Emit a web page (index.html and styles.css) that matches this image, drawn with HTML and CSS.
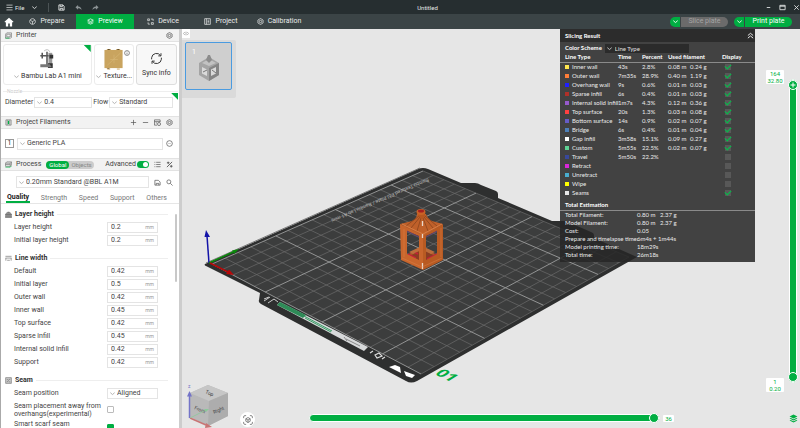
FILE: index.html
```html
<!DOCTYPE html>
<html lang="en">
<head>
<meta charset="utf-8">
<title>Untitled</title>
<link rel="stylesheet" href="styles.css">
</head>
<body>
<svg class="defs" width="0" height="0" aria-hidden="true">
  <symbol id="i-down" viewBox="0 0 8 8"><path d="M1.5 3 4 5.2 6.5 3" /></symbol>
  <symbol id="i-gear" viewBox="0 0 16 16"><path d="M8 1.2 13.9 4.6v6.8L8 14.8 2.1 11.4V4.6z" /><circle cx="8" cy="8" r="2.8" /></symbol>
  <symbol id="i-cube" viewBox="0 0 16 16"><path d="M8 1.5a6.5 6.5 0 1 0 .1 0M3 5.5 8 8l5-2.5M8 8v6" /></symbol>
  <symbol id="i-layers" viewBox="0 0 16 16"><path d="M1.5 5 8 2l6.5 3L8 8zM1.5 8 8 11l6.500-3M1.500 11 8 14l6.500-3" /></symbol>
  <symbol id="i-menu" viewBox="0 0 16 16"><path d="M1 2.500h14M1 8h14M1 13.500h14" /></symbol>
</svg>
<div class="app">
  <header class="titlebar">
    <button class="file"><svg class="ic"><use href="#i-menu"/></svg>File</button>
    <button class="tb" aria-label="File menu"><svg class="ic"><use href="#i-down"/></svg></button>
    <span class="sep"></span>
    <button class="tb" aria-label="Save"><svg class="ic" viewBox="0 0 16 16"><path d="M2 2h9l3 3v9H2zM5 2v4h5V2M5 14v-4h6v4" stroke-width="2"/></svg></button>
    <button class="tb dim" aria-label="Undo"><svg class="ic" viewBox="0 0 16 16"><path class="solid" d="M7 2v3.500c5 0 7.500 3 8 8-2-3-4-4-8-4V13L1 7.500z"/></svg></button>
    <button class="tb dim" aria-label="Redo"><svg class="ic" viewBox="0 0 16 16"><path class="solid" d="M9 2v3.500c-5 0-7.500 3-8 8 2-3 4-4 8-4V13l6-5.500z"/></svg></button>
    <h1>Untitled</h1>
    <div class="winbtns">
      <button class="tb" aria-label="Minimize"><svg class="ic" viewBox="0 0 8 8"><path d="M2 4h4"/></svg></button>
      <button class="tb" aria-label="Maximize"><svg class="ic" viewBox="0 0 8 8"><path d="M1 1.500h6v5H1zM1 2.500h6"/></svg></button>
      <button class="tb" aria-label="Close"><svg class="ic" viewBox="0 0 8 8"><path d="M1.500 1.500l5 5M6.500 1.500l-5 5"/></svg></button>
    </div>
  </header>

  <nav class="nav">
    <a href="#" class="home" aria-label="Home"><svg viewBox="0 0 16 16"><path d="M8 1 .8 7.500l1 1.200L3 7.800V15h3.700v-4.500h2.600V15H13V7.800l1.200.9 1-1.200z" fill="#fff"/></svg></a>
    <a href="#" class="tab"><svg class="ic"><use href="#i-cube"/></svg>Prepare</a>
    <a href="#" class="tab on"><svg class="ic"><use href="#i-layers"/></svg>Preview</a>
    <a href="#" class="tab"><svg class="ic" viewBox="0 0 16 16"><path d="M1.500 2h4v4h-4zM10 10.500h4.500v4H10zM9 2.500h5v4M6.500 14H2.500v-4"/></svg>Device</a>
    <a href="#" class="tab"><svg class="ic" viewBox="0 0 16 16"><path d="M1.500 1.500h13v13h-13zM5.500 1.500v13M8 5h4M8 8h4M8 11h4"/></svg>Project</a>
    <a href="#" class="tab"><svg class="ic"><use href="#i-gear"/></svg>Calibration</a>
    <div class="actions">
      <div class="split off"><button aria-label="Slice options"><svg class="ic"><use href="#i-down"/></svg></button><button class="main">Slice plate</button></div>
      <div class="split"><button aria-label="Print options"><svg class="ic"><use href="#i-down"/></svg></button><button class="main">Print plate</button></div>
    </div>
  </nav>

  <div class="body">
    <aside class="side">
      <div class="head">
        <svg class="ic hi" viewBox="0 0 16 16"><path d="M4 2h11v10l-2 2H1V5zM4 5h8v6H4z"/><path d="M1 14h9" stroke="#00ae42"/></svg>
        <h2>Printer</h2>
        <button class="ib end" aria-label="Printer settings"><svg class="ic"><use href="#i-gear"/></svg></button>
      </div>
      <div class="cards">
        <div class="card wide tick">
          <svg class="pic" viewBox="0 0 16 22"><path d="M5 2q4-3 6 1" fill="none" stroke="#bbb"/><path d="M1 7h11M3 4v6M8 3v15" stroke="#555" fill="none" stroke-width="1.600"/><path d="M9.500 4h4v13h-4z" fill="#999"/><path d="M10.500 6h4v4h-4zM9 15h5v5H9z" fill="#333"/><path d="M1 16h10l2 3H1z" fill="#777"/></svg>
          <button class="pick"><svg class="ic"><use href="#i-down"/></svg>Bambu Lab A1 mini</button>
        </div>
        <div class="card plate">
          <svg class="pic" viewBox="0 0 22 22"><rect x="1" y="1" width="19" height="19" fill="#c9a45f"/><path d="M4 1V0h3v1M14 1V0h3v1M4 20v1h3M14 21h3" stroke="#c9a45f"/><path d="M4 17 18 4M11 6v9M7 11h8" stroke="#d8b878" stroke-width=".6"/></svg>
          <svg class="ic info" viewBox="0 0 16 16"><circle cx="8" cy="8" r="6.500"/><path d="M8 7v5M8 4v1.500"/></svg>
          <button class="pick"><svg class="ic"><use href="#i-down"/></svg>Texture...</button>
        </div>
        <button class="card sync">
          <svg viewBox="0 0 16 16"><path d="M2 9V7a6 6 0 0 1 11-2.500M14 7v2a6 6 0 0 1-11 2.500M13.500 1.500v3.300h-3.300M2.500 14.500v-3.300h3.300" fill="none" stroke="#333" stroke-width="1.200"/></svg>
          Sync info
        </button>
      </div>
      <fieldset class="nozzle tick">
        <legend>Nozzle</legend>
        <label for="dia">Diameter</label>
        <span class="sel"><svg class="ic"><use href="#i-down"/></svg><select id="dia"><option>0.4</option></select></span>
        <label for="flow">Flow</label>
        <span class="sel"><svg class="ic"><use href="#i-down"/></svg><select id="flow"><option>Standard</option></select></span>
      </fieldset>

      <div class="head">
        <svg class="ic hi" viewBox="0 0 16 16"><path d="M2 2h12v12H2zM5 2v12M11 2v12"/><path d="M8 4v8" stroke="#00ae42" stroke-width="3"/></svg>
        <h2>Project Filaments</h2>
        <button class="ib end" aria-label="Add"><svg class="ic" viewBox="0 0 16 16"><path d="M8 2v12M2 8h12"/></svg></button>
        <button class="ib" aria-label="Remove"><svg class="ic" viewBox="0 0 16 16"><path d="M2 8h12"/></svg></button>
        <button class="ib" aria-label="Sync filaments"><svg class="ic" viewBox="0 0 16 16"><path d="M1 2h13v5M1 2v12h6M1 6h13M4 9h3"/><circle cx="11.500" cy="11.500" r="3.500"/></svg></button>
        <button class="ib" aria-label="Filament settings"><svg class="ic"><use href="#i-gear"/></svg></button>
      </div>
      <div class="line filament">
        <span class="num">1</span>
        <span class="sel"><svg class="ic"><use href="#i-down"/></svg><select aria-label="Filament"><option>Generic PLA</option></select></span>
        <button class="ib" aria-label="Edit filament"><svg class="ic" viewBox="0 0 16 16"><circle cx="8" cy="8" r="6.500"/><path d="M4.500 8h1M7.500 8h1M10.500 8h1"/></svg></button>
      </div>

      <div class="head">
        <svg class="ic hi" viewBox="0 0 16 16"><path d="M4 2h11v7l-3 3H1V5zM1 5h11l3-3M12 5v7M1 8h11"/><path d="M1 14h11l3-3" stroke="#00ae42"/></svg>
        <h2>Process</h2>
        <span class="scope"><button class="cur">Global</button><button>Objects</button></span>
        <label class="adv end">Advanced<input type="checkbox" class="switch" checked></label>
        <button class="ib" aria-label="List"><svg class="ic" viewBox="0 0 16 16"><path d="M5 3h10M5 8h10M5 13h10M1 3h2M1 8h2M1 13h2"/></svg></button>
        <button class="ib" aria-label="Compare"><svg class="ic" viewBox="0 0 16 16"><path d="M2 14 14 2M2 4h6M5 1.500V7M9 12h6M12 9v6" stroke-width="2"/></svg></button>
      </div>
      <div class="line preset">
        <span class="sel"><svg class="ic"><use href="#i-down"/></svg><select aria-label="Preset"><option>0.20mm Standard @BBL A1M</option></select></span>
        <button class="ib" aria-label="Save preset"><svg class="ic" viewBox="0 0 16 16"><path d="M2 3h8l4 4v7H2zM5 14v-4h6v4"/></svg></button>
        <button class="ib" aria-label="Search"><svg class="ic" viewBox="0 0 16 16"><circle cx="6.500" cy="6.500" r="4.500"/><path d="M10 10l5 5"/></svg></button>
      </div>
      <div class="tabs" role="tablist">
        <button role="tab" class="cur">Quality</button><button role="tab">Strength</button><button role="tab">Speed</button><button role="tab">Support</button><button role="tab">Others</button>
      </div>

      <div class="settings">
        <section>
          <h3><svg class="ic" viewBox="0 0 16 16"><path d="M2 6q6-7 12 0M1 7h14v3H1zM1 12h14v3H1z" fill="#777"/></svg>Layer height</h3>
          <div class="row"><label for="s1">Layer height</label><span class="val"><input id="s1" value="0.2"><i>mm</i></span></div>
          <div class="row"><label for="s2">Initial layer height</label><span class="val"><input id="s2" value="0.2"><i>mm</i></span></div>
        </section>
        <section>
          <h3><svg class="ic" viewBox="0 0 16 16"><path d="M1 3h14M1 7h14M2 7v6M14 7v6M5 12h6"/></svg>Line width</h3>
          <div class="row"><label for="w1">Default</label><span class="val"><input id="w1" value="0.42"><i>mm</i></span></div>
          <div class="row"><label for="w2">Initial layer</label><span class="val"><input id="w2" value="0.5"><i>mm</i></span></div>
          <div class="row"><label for="w3">Outer wall</label><span class="val"><input id="w3" value="0.42"><i>mm</i></span></div>
          <div class="row"><label for="w4">Inner wall</label><span class="val"><input id="w4" value="0.45"><i>mm</i></span></div>
          <div class="row"><label for="w5">Top surface</label><span class="val"><input id="w5" value="0.42"><i>mm</i></span></div>
          <div class="row"><label for="w6">Sparse infill</label><span class="val"><input id="w6" value="0.45"><i>mm</i></span></div>
          <div class="row"><label for="w7">Internal solid infill</label><span class="val"><input id="w7" value="0.42"><i>mm</i></span></div>
          <div class="row"><label for="w8">Support</label><span class="val"><input id="w8" value="0.42"><i>mm</i></span></div>
        </section>
        <section>
          <h3><svg class="ic" viewBox="0 0 16 16"><path d="M1.500 1.500h13v13h-13z" fill="#ccc"/><path d="M4 11q4 0 4-3t4-3M4 6h3M9 11h3"/></svg>Seam</h3>
          <div class="row"><label for="m1">Seam position</label><span class="sel"><svg class="ic"><use href="#i-down"/></svg><select id="m1"><option>Aligned</option></select></span></div>
          <div class="row tall"><label for="m2">Seam placement away from overhangs(experimental)</label><span class="box"><input type="checkbox" id="m2"></span></div>
          <div class="row last"><label for="m3">Smart scarf seam</label><span class="box"><input type="checkbox" id="m3" checked></span></div>
        </section>
      </div>
    </aside>

    <main class="view">
      <svg class="scene" viewBox="182 29 618 399" preserveAspectRatio="xMidYMid slice" role="img" aria-label="Build plate">
        <path d="M205 264 418 169Q423 167 428 169L461 183H475Q478 183 481 185L496 191Q498 192 498 194V198L552 221H564Q566 221 568 222L591 232Q594 233 594 235V238L637 257 417 381Q411 384 406 381L261 304Q258 302 259 300L260 293 206 266Q204 265 205 264Z" fill="#2e2f2f"/>
        <path d="M212 264 423 171 629 257 421 374Z" fill="#3c3d3d"/>
        <path d="M206 263 420 168" stroke="#777" fill="none"/>
        <path id="minor" stroke="#6b6c6c" stroke-width=".7" fill="none"/>
        <path id="major" stroke="#9c9d9d" stroke-width=".9" fill="none"/>
        <text class="engraved" transform="translate(428 178) rotate(157)">Bambu Textured PEI Plate / Bambu Lab A1 mini</text>
        <path d="M277 305 280 302 368 347 364 351Z" fill="#d7d9da"/>
        <path d="M277 305 280 302 306 315 303 318Z" fill="#2e8b57"/>
        <path d="M304 316 332 331M305 318 331 332" stroke="#3a9a66"/>
        <path d="M264 301 270 297M268 303 274 299 278 302M264 299 269 297" stroke="#ccc" fill="none"/>
        <path d="M346 339 360 346M344 337 347 341" stroke="#888"/>
        <path d="M370 353 373 351M382 359 385 357M375 355 379 353 382 356 377 358Z" stroke="#ddd" fill="none" stroke-width="1.200"/>
        <path d="M389 367 395 365 400 367 401 373ZM404 371 415 375 412 378 406 376Z" fill="#fff"/>
        <text class="plate-no" transform="matrix(.88 .42 -.76 .46 434 374)">01</text>

        <g stroke-width="1.500" fill="none">
          <path d="M209 263 207 236" stroke="#1414a8"/><path d="M206 230 204.500 237H210Z" fill="#1414a8"/>
          <path d="M209 263 233 252" stroke="#0a8a0a"/><path d="M239 249 232 250.500 234 254Z" fill="#0a8a0a"/>
          <path d="M210 263 228 272" stroke="#b80808"/><path d="M234 275 226 274 229 269.500Z" fill="#b80808"/>
        </g>

        <g stroke-linejoin="round">
          <path d="M401 258 422 247 443 258 423 269Z" fill="#b05a2a"/>
          <path d="M407 257 422 250 438 257 423 265Z" fill="#8a3d22"/>
          <path d="M408 254 416 258M427 259 437 254M414 252l4 2" stroke="#c4203a" stroke-width="1.500"/>
          <path d="M409 252 422 246 435 252 431 254 422 249 413 254Z" fill="#bb6c3c"/>
          <path fill-rule="evenodd" d="M400 224 423 235V270L401 260ZM407 231V254L419 260V236Z" fill="#c8652c"/>
          <path fill-rule="evenodd" d="M443 224 423 235V270L443 260ZM437 231 426 236V260L437 254Z" fill="#b85a22"/>
          <path d="M407 231 419 237M426 237 437 231" stroke="#66406e"/>
          <path d="M400 224 412 221Q417 218 417 214H426Q427 218 432 221L443 224 423 236Z" fill="#bf602a"/>
          <path d="M406 226 419 216M411 228 420 217M417 231 421 218M437 226 425 216M433 228 424 217M428 231 423 218" stroke="#8a441d" stroke-width=".8"/>
          <path d="M402 224 423 234 442 224" stroke="#e08a50" fill="none" stroke-width=".7"/>
          <path d="M418 213V216L422 219 425 216V213Z" fill="#b8571f"/>
          <ellipse cx="421" cy="212" rx="4.500" ry="3" fill="#c96326"/><ellipse cx="421" cy="211" rx="3" ry="1.500" fill="#a81f1f"/>
          <path d="M422.500 221V226M422.500 234V238M422.500 263V269" stroke="#e8d8cc" stroke-width="1.300"/>
          <path d="M402 258 422 267 442 258M404 229V257M441 228V257" stroke="#e08a50" fill="none" stroke-width=".4"/>
        </g>

        <g>
          <path d="M208 385 228 393V416L208 426 190 417V393Z" fill="#b9b9b9"/>
          <path d="M208 385 228 393 209 401 190 393Z" fill="#c6c6c6"/><path d="M209 401 228 393V416L208 426Z" fill="#adadad"/>
          <text class="face" transform="translate(205 393) rotate(25)">Top</text>
          <text class="face" transform="translate(194 409) rotate(22)">Front</text>
          <text class="face" transform="translate(214 414) rotate(-24)">Right</text>
          <text class="axis" x="188" y="388">z</text>
          <path d="M189.500 418V395" stroke="#7474c8" stroke-width="1.500"/><path d="M189.500 391 187 396.500H192Z" fill="#7474c8"/>
          <path d="M190 418 206 425" stroke="#c87474" stroke-width="1.500"/><path d="M212 427 206 423 205 428Z" fill="#c87474"/>
          <path d="M190 418 206 410" stroke="#8cc89a" stroke-width=".8"/><path d="M209 409 204 409 206 412Z" fill="#8cc89a"/>
        </g>
      </svg>

      <button class="collapse" aria-label="Collapse sidebar"><svg class="ic" viewBox="0 0 16 16"><path d="M5 4 1 8l4 4M11 4l4 4-4 4M8 3v10"/></svg></button>
      <div class="thumbs">
        <button class="thumb" aria-label="Plate 1"><span>1</span>
          <svg viewBox="0 0 22 28"><path d="M1 9 11 3 21 9V21L11 27 1 21Z" fill="#a4a4a4"/><path d="M11 14 21 9V21L11 27Z" fill="#858585"/><path d="M4 13 9 15.500V22L4 19.500ZM13 15.500 18 13V19.500L13 22Z" fill="#dadada"/><path d="M4 9 11 5 18 9 11 12Z" fill="#c2c2c2"/><path d="M8 6 10 1H12L14 6 11 9Z" fill="#8c8c8c"/><path d="M5 18 9 16M14 16 18 19" stroke="#777"/></svg>
        </button>
      </div>
      <button class="fit" aria-label="Fit view"><svg class="ic" viewBox="0 0 16 16"><path d="M1 5V3q0-2 2-2h2M11 1h2q2 0 2 2v2M15 11v2q0 2-2 2h-2M5 15H3q-2 0-2-2v-2M8 4l3.500 2v4L8 12l-3.500-2V6zM4.500 6 8 8l3.500-2M8 8v4"/></svg></button>

      <div class="result">
        <div class="rhead"><h2>Slicing Result</h2><button aria-label="Collapse"><svg class="ic" viewBox="0 0 8 8"><path d="M1 4 4 1.500 7 4M1 7 4 4.500 7 7"/></svg></button></div>
        <div class="scheme"><label for="cs">Color Scheme</label><span class="sel"><svg class="ic"><use href="#i-down"/></svg><select id="cs"><option>Line Type</option></select></span></div>
        <table class="types">
          <colgroup><col class="c1"><col class="c2"><col class="c3"><col class="c4"><col class="c5"><col></colgroup>
          <thead><tr><th>Line Type</th><th>Time</th><th>Percent</th><th colspan="2">Used filament</th><th>Display</th></tr></thead>
          <tbody id="rows"></tbody>
        </table>
        <h2 class="est">Total Estimation</h2>
        <table class="totals">
          <tr><th>Total Filament:</th><td>0.80 m</td><td>2.37 g</td></tr>
          <tr><th>Model Filament:</th><td>0.80 m</td><td>2.37 g</td></tr>
          <tr><th>Cost:</th><td>0.05</td><td></td></tr>
          <tr><th>Prepare and timelapse time:</th><td colspan="2">6m4s + 1m44s</td></tr>
          <tr><th>Model printing time:</th><td colspan="2">18m29s</td></tr>
          <tr><th>Total time:</th><td colspan="2">26m18s</td></tr>
        </table>
      </div>

      <div class="layers">
        <output class="tip top">164<br>32.80</output>
        <output class="tip bottom">1<br>0.20</output>
        <input type="range" class="vr" min="1" max="164" value="164" aria-label="Top layer">
        <input type="range" class="vr low" min="1" max="164" value="1" aria-label="Bottom layer">
        <svg class="plus" viewBox="0 0 8 8"><path d="M4 1.500v5M1.500 4h5" stroke="#fff"/></svg>
      </div>
      <div class="moves">
        <input type="range" class="hr" min="0" max="36" value="36" aria-label="Move">
        <output class="tip">36</output>
      </div>
      <button class="stack" aria-label="Layers"><svg viewBox="0 0 16 16"><path d="M8 1 15 4.500 8 8 1 4.500ZM1 8l2-1 5 2.500L13 7l2 1-7 3.500zM1 11.500l2-1L8 13l5-2.500 2 1L8 15z" fill="#00ae42"/></svg></button>
    </main>
  </div>
</div>
<script src="app.js"></script>
</body>
</html>
```
FILE: app.js
```js
// Feature type rows: color, name, time, percent, length, weight, shown
const types = [
  ['#ffe64d', 'Inner wall', '43s', '2.8%', '0.08 m', '0.24 g', true],
  ['#ff7d38', 'Outer wall', '7m35s', '28.9%', '0.40 m', '1.19 g', true],
  ['#1f1fff', 'Overhang wall', '9s', '0.6%', '0.01 m', '0.03 g', true],
  ['#b03029', 'Sparse infill', '6s', '0.4%', '0.01 m', '0.03 g', true],
  ['#965acc', 'Internal solid infill', '1m7s', '4.3%', '0.12 m', '0.36 g', true],
  ['#ff4040', 'Top surface', '20s', '1.3%', '0.03 m', '0.08 g', true],
  ['#665cc7', 'Bottom surface', '14s', '0.9%', '0.02 m', '0.07 g', true],
  ['#4d80ba', 'Bridge', '6s', '0.4%', '0.01 m', '0.04 g', true],
  ['#ffffff', 'Gap infill', '3m58s', '15.1%', '0.09 m', '0.27 g', true],
  ['#5ed194', 'Custom', '5m55s', '22.5%', '0.02 m', '0.07 g', true],
  ['#38489b', 'Travel', '5m50s', '22.2%', '', '', false],
  ['#d926d9', 'Retract', '', '', '', '', false],
  ['#49adcf', 'Unretract', '', '', '', '', false],
  ['#ffff00', 'Wipe', '', '', '', '', false],
  ['#e6e6e6', 'Seams', '', '', '', '', true],
];
document.getElementById('rows').innerHTML = types.map(([c, n, t, p, l, w, on]) =>
  `<tr><td><span class="sw" style="background:${c}"></span>${n}</td><td>${t}</td><td>${p}</td><td>${l}</td><td>${w}</td>` +
  `<td><input type="checkbox" aria-label="Display ${n}"${on ? ' checked' : ''}></td></tr>`).join('');

// Perspective grid of the 180 mm plate, one line every 10 mm
const [A, B, C, D] = [[212, 264], [423, 171], [629, 257], [421, 374]];
const sx = A[0] - B[0] + C[0] - D[0], sy = A[1] - B[1] + C[1] - D[1];
const dx1 = B[0] - C[0], dx2 = D[0] - C[0], dy1 = B[1] - C[1], dy2 = D[1] - C[1];
const det = dx1 * dy2 - dx2 * dy1;
const g = (sx * dy2 - dx2 * sy) / det, h = (dx1 * sy - sx * dy1) / det;
function project(u, v) {
  const w = g * u + h * v + 1;
  return [
    ((B[0] - A[0] + g * B[0]) * u + (D[0] - A[0] + h * D[0]) * v + A[0]) / w,
    ((B[1] - A[1] + g * B[1]) * u + (D[1] - A[1] + h * D[1]) * v + A[1]) / w,
  ].map(n => n.toFixed(1)).join(' ');
}
const paths = { minor: '', major: '' };
for (let i = 0; i <= 18; i++) {
  const k = i / 18;
  paths[i % 5 === 0 ? 'major' : 'minor'] +=
    `M${project(k, 0)}L${project(k, 1)}M${project(0, k)}L${project(1, k)}`;
}
for (const id in paths) document.getElementById(id).setAttribute('d', paths[id]);
```
FILE: styles.css
```css
* { box-sizing: border-box; margin: 0; padding: 0; }
body { font: 7px/9px Roboto, "Open Sans", sans-serif; color: #444; }
button, input, select { font: inherit; color: inherit; background: none; border: 0; outline: 0; }
select { appearance: none; }
a { color: inherit; text-decoration: none; }
i { font-style: normal; }
h1, h2, h3 { font: inherit; }
table { border-collapse: collapse; }
.defs { position: absolute; }
.ic { width: 7px; height: 7px; fill: none; stroke: currentColor; stroke-width: 1; flex: none; display: block; }
.solid { fill: currentColor; stroke: none; }
symbol[viewBox="0 0 16 16"], .ic[viewBox="0 0 16 16"] { stroke-width: 1.6; }
.end { margin-left: auto; }

.app { display: flex; flex-direction: column; height: 100vh; overflow: hidden; }

.titlebar { position: relative; display: flex; align-items: center; height: 14px; flex: none; padding: 0 6px; background: #262e30; color: #e4e6e6; font-size: 6px; }
.titlebar h1 { position: absolute; left: 0; right: 0; text-align: center; padding-left: 55px; pointer-events: none; }
.file { display: flex; align-items: center; gap: 2px; width: 20px; margin-right: 5px; }
.tb { display: grid; place-items: center; width: 7px; margin-right: 10px; }
.dim { color: #8d9496; }
.sep { width: 1px; height: 9px; background: #4b5355; margin-right: 9px; }
.titlebar .tb { z-index: 1; }
.winbtns { display: flex; margin-left: auto; margin-right: -6px; gap: 7px; }
.winbtns .tb { margin: 0; }

.nav { display: flex; align-items: stretch; height: 15px; flex: none; background: #3b4446; color: #e9ebeb; }
.home { width: 18px; display: grid; place-items: center; }
.home svg { width: 10px; height: 10px; }
.tab { width: 58px; display: flex; align-items: center; justify-content: center; gap: 4px; }
.tab.on { background: #00ae42; color: #fff; }
.actions { display: flex; align-items: center; gap: 6px; margin-left: auto; padding-right: 8px; }
.split { display: flex; height: 10px; gap: 1px; color: #fff; }
.split button { background: #00ae42; width: 10px; display: grid; place-items: center; border-radius: 5px 0 0 5px; }
.split .main { width: 47px; border-radius: 0 5px 5px 0; }
.split.off .main { background: #6b6b6b; color: #a5a5a5; }

.body { display: flex; flex: 1; min-height: 0; }
.side { width: 182px; flex: none; background: #fff; border-right: 3px solid #cdcdcd; border-left: 1px solid #aaa; overflow: hidden; }
.head { display: flex; align-items: center; height: 13px; padding: 0 6px 0 4px; gap: 5px; background: #f2f2f2; border-top: 1px solid #e2e2e2; border-bottom: 1px solid #e2e2e2; }
.hi { color: #777; margin-right: -1px; }
.ib { width: 7px; height: 7px; flex: none; color: #555; }

.cards { display: flex; gap: 2px; padding: 2px 2px 3px; height: 46px; }
.card { position: relative; border: 1px solid #ececec; border-radius: 3px; display: flex; flex-direction: column; align-items: center; justify-content: space-between; padding: 4px 0 3px; min-width: 0; }
.wide { flex: 91 1 0; }
.plate { flex: 40 1 0; }
.sync { flex: 41 1 0; background: #f8f8f8; border-color: #ddd; justify-content: center; gap: 4px; color: #333; }
.sync svg { width: 13px; height: 13px; }
.pic { width: 22px; height: 21px; }
.pick { display: flex; align-items: center; white-space: nowrap; gap: 1px; color: #333; }
.pick .ic, .sel .ic { color: #aaa; }
.info { position: absolute; top: 5px; right: 3px; width: 6px; height: 6px; }
.tick::after { content: ""; position: absolute; top: 0; right: 0; width: 7px; height: 7px; background: #00ae42; clip-path: polygon(0 0, 100% 0, 100% 100%); }

.nozzle { position: relative; display: flex; align-items: center; gap: 1px; margin: 1px 2px 5px; height: 22px; padding: 0 5px 0 2px; border: 0; border-top: 1px solid #eee; color: #444; }
.nozzle legend { font-size: 5px; line-height: 4px; color: #ccc; margin-left: 2px; }
.nozzle .sel { width: 58px; }
.nozzle .sel + label { margin-left: auto; }
.nozzle .sel:last-child { width: 64px; }
.sel { display: flex; align-items: center; gap: 1px; height: 11px; padding-left: 1px; border: 1px solid #e4e4e4; color: #444; min-width: 0; }
.sel select { flex: 1; min-width: 0; height: 9px; }

.line { display: flex; align-items: center; gap: 5px; padding: 0 6px 0 4px; }
.line .sel { flex: 1; height: 12px; }
.filament { height: 29px; gap: 3px; }
.num { width: 9px; height: 9px; line-height: 7px; text-align: center; border: 1px solid #999; color: #333; }
.scope { display: flex; border-radius: 5px; background: #ccc; color: #888; font-size: 6px; line-height: 8px; }
.scope button { padding: 0 2px; }
.scope .cur { background: #00ae42; color: #fff; border-radius: 4px; padding: 0 3px; }
.adv { display: flex; align-items: center; gap: 1px; color: #444; }
.switch { appearance: none; width: 12px; height: 7px; border-radius: 4px; background: #00ae42; display: flex; justify-content: flex-end; padding: 1px; }
.switch::after { content: ""; width: 5px; height: 5px; border-radius: 50%; background: #fff; }
.preset { height: 22px; padding-left: 15px; }
.tabs { display: flex; justify-content: space-between; padding: 0 11px 0 5px; height: 11px; border-bottom: 1px solid #e6e6e6; color: #777; }
.tabs button { padding: 0 1px; line-height: 8px; }
.tabs .cur { color: #222; font-weight: 700; border-bottom: 2px solid #00ae42; }

.settings { padding: 3px 11px 0 4px; position: relative; }
.settings::after { content: ""; position: absolute; right: 2px; top: 10px; width: 2px; height: 68px; background: #c8c8c8; border-radius: 1px; }
section { margin-bottom: 4px; }
h3 { display: flex; align-items: center; gap: 3px; height: 14px; font-weight: 700; color: #333; }
h3::after { content: ""; flex: 1; height: 1px; background: #eee; }
h3 .ic { color: #777; }
.row { display: flex; align-items: center; height: 13px; padding: 0 10px 0 9px; }
.row label { flex: 1; }
.row .sel, .val, .box { width: 51px; flex: none; }
.val { display: flex; align-items: center; height: 11px; border: 1px solid #e4e4e4; padding: 0 3px; }
.val input { flex: 1; min-width: 0; height: 9px; }
.val i { font-size: 5px; color: #999; }
.row.tall { height: 19px; line-height: 8px; }
.row.last { height: 16px; line-height: 8px; align-items: flex-start; padding-top: 1px; }
.row.last .box { padding-top: 4px; }
.box input { appearance: none; display: block; width: 7px; height: 7px; border: 1px solid #bbb; border-radius: 1px; }
.box input:checked { background: #00ae42; border-color: #00ae42; }

.view { position: relative; flex: 1; min-width: 0; background: #e6e6e6; }
.scene { position: absolute; inset: 0; width: 100%; height: 100%; }
.engraved { font: 5px Roboto, sans-serif; fill: #b5b5b5; }
.plate-no { font: 700 17px "Open Sans", sans-serif; fill: #00ae42; }
.face { font: 5px Roboto, sans-serif; fill: #444; }
.axis { font: 5px Roboto, sans-serif; fill: #7474c8; }
.collapse { position: absolute; left: 0; top: 0; width: 8px; height: 9px; background: #fff; display: grid; place-items: center; color: #888; }
.collapse .ic { width: 6px; }
.thumbs { position: absolute; left: 0; top: 11px; width: 54px; height: 58px; background: #dadada; border-radius: 0 2px 2px 0; padding: 2px 3px; }
.thumb { position: relative; width: 47px; height: 48px; border: 1px solid #4a9be0; border-radius: 2px; background: #cfcfcf; display: grid; place-items: center; }
.thumb span { position: absolute; left: 6px; top: 5px; color: #fff; }
.thumb svg { width: 22px; height: 28px; margin-top: 4px; }
.fit { position: absolute; left: 58px; bottom: 1px; width: 15px; height: 15px; border-radius: 50%; background: #fff; display: grid; place-items: center; color: #444; }
.fit .ic { width: 10px; height: 10px; stroke-width: 1; }

.result { position: absolute; right: 45px; top: 0; width: 195px; padding-bottom: 3px; background: rgba(38, 38, 38, .86); color: #ececec; font-family: Lato, Roboto, sans-serif; font-size: 6px; line-height: 8px; }
.rhead { display: flex; align-items: center; justify-content: space-between; height: 13px; padding: 0 1px 0 5px; background: #2c2c2c; color: #fff; font-weight: 700; }
.scheme { display: flex; align-items: center; gap: 3px; height: 11px; padding-left: 5px; color: #fff; font-weight: 700; }
.scheme .sel { width: 84px; height: 9px; border: 0; background: #2b2b2b; color: #e0e0e0; font-weight: 400; gap: 2px; margin-top: 2px; }
.scheme .ic { color: #ccc; }
.types { width: 100%; table-layout: fixed; }
.types td, .types th { height: 9px; line-height: 8px; text-align: left; white-space: nowrap; }
.types th { color: #fff; font-weight: 700; border-bottom: 1px solid #8a8a8a; }
.types td:first-child, .types th:first-child { padding-left: 5px; }
.types .c1 { width: 58px; }
.types .c2 { width: 24px; }
.types .c3 { width: 26px; }
.types .c4 { width: 22px; }
.types .c5 { width: 32px; }
.sw { display: inline-block; width: 4px; height: 4px; margin-right: 3px; vertical-align: middle; }
.types input { appearance: none; display: grid; place-items: center; width: 6px; height: 6px; margin-left: 3px; background: #585858; }
.types input:checked::after { content: ""; width: 5px; height: 3px; border-left: 1px solid #00c04a; border-bottom: 1px solid #00c04a; transform: rotate(-45deg); margin-bottom: 1px; }
.est { padding: 4px 5px 1px; color: #fff; font-weight: 700; border-bottom: 1px solid #8a8a8a; }
.totals { margin-left: 5px; table-layout: fixed; width: 118px; }
.totals th, .totals td { text-align: left; font-weight: 400; height: 8px; white-space: nowrap; }
.totals th { width: 72px; }
.totals td { width: 23px; }

.layers { position: absolute; right: 1px; top: 50px; bottom: 45px; width: 12px; }
.vr { position: absolute; inset: 0; width: 12px; height: 100%; writing-mode: vertical-lr; direction: rtl; appearance: none; }
.vr::-webkit-slider-runnable-track { width: 8px; height: 100%; background: #00ae42; border: 1px solid #fff; border-radius: 4px; margin: 0 2px; }
.low { pointer-events: none; }
.low::-webkit-slider-runnable-track { background: none; border-color: transparent; }
.vr::-webkit-slider-thumb { appearance: none; width: 10px; height: 10px; margin-left: -2px; border-radius: 50%; background: #00ae42; border: 1px solid #fff; }
.plus { position: absolute; left: 2px; top: 2px; width: 8px; height: 8px; pointer-events: none; }
.tip { background: #fff; color: #00ae42; font-size: 6px; line-height: 7px; text-align: center; border-radius: 1px; }
.layers .tip { position: absolute; right: 15px; width: 18px; }
.layers .top { top: -9px; }
.layers .bottom { bottom: -9px; }
.moves { position: absolute; left: 127px; right: 126px; bottom: 5px; display: flex; align-items: center; gap: 3px; }
.hr { appearance: none; flex: 1; min-width: 0; height: 10px; }
.hr::-webkit-slider-runnable-track { height: 8px; background: #00ae42; border: 1px solid #fff; border-radius: 4px; }
.hr::-webkit-slider-thumb { appearance: none; width: 10px; height: 10px; margin-top: -2px; border-radius: 50%; background: #00ae42; border: 1px solid #fff; }
.moves .tip { width: 11px; }
.stack { position: absolute; right: 2px; bottom: 5px; width: 9px; height: 9px; }
.stack svg { width: 9px; height: 9px; display: block; }
```
